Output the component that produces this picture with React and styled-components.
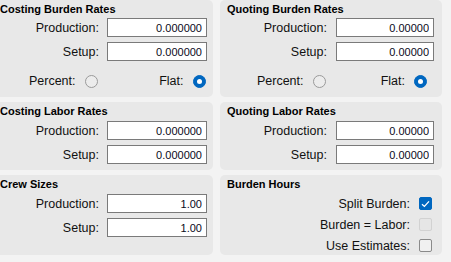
import styled, { createGlobalStyle } from "styled-components";

const GlobalStyle = createGlobalStyle`
  html, body {
    margin: 0;
    padding: 0;
    background: #f3f3f3;
  }
  body {
    font-family: "Liberation Sans", Arial, sans-serif;
    color: #000;
    overflow: hidden;
  }
`;

const Layout = styled.div`
  display: grid;
  grid-template-columns: 220px 222px;
  grid-template-rows: 97px 68px 80px;
  column-gap: 7px;
  row-gap: 5px;
  margin-left: -7px;
`;

const Panel = styled.section`
  background: #e8e8e8;
  border-radius: 5px;
  padding: 1px ${(p) => p.$padRight}px 0 7px;
  display: flex;
  flex-direction: column;
`;

const Title = styled.h3`
  margin: 0 0 ${(p) => p.$after || 1}px;
  font-size: 11px;
  font-weight: bold;
  line-height: 16px;
  height: 16px;
  white-space: nowrap;
`;

const Fields = styled.div`
  display: grid;
  grid-template-columns: 1fr ${(p) => p.$inputWidth}px;
  column-gap: ${(p) => p.$gap}px;
  row-gap: 5px;
  align-items: center;
`;

const Label = styled.label`
  text-align: right;
  font-size: 12.5px;
  color: #111;
  white-space: nowrap;
`;

const NumberBox = styled.input`
  box-sizing: border-box;
  width: 100%;
  height: 19px;
  border: 1px solid #7a7a7a;
  background: #fff;
  text-align: right;
  font: 11px "Liberation Sans", Arial, sans-serif;
  color: #0a0a20;
  padding: 0 4px;
  outline: none;
`;

const ChoiceRow = styled.div`
  display: grid;
  grid-template-columns: 1fr ${(p) => p.$inputWidth}px;
  column-gap: ${(p) => p.$gap}px;
  margin-top: 12px;
  height: 16px;
`;

const Choice = styled.div`
  display: flex;
  justify-content: flex-end;
  align-items: center;
  gap: 9px;
  padding-right: ${(p) => p.$inset}px;
`;

const Radio = styled.span`
  box-sizing: border-box;
  width: 13px;
  height: 13px;
  border-radius: 50%;
  border: 1px solid ${(p) => (p.$on ? "#0067c0" : "#9a9a9a")};
  background: ${(p) => (p.$on ? "#0067c0" : "#ececec")};
  display: flex;
  align-items: center;
  justify-content: center;

  &::after {
    content: "";
    display: ${(p) => (p.$on ? "block" : "none")};
    width: 5px;
    height: 5px;
    border-radius: 50%;
    background: #fff;
  }
`;

const Checks = styled.div`
  display: flex;
  flex-direction: column;
`;

const CheckRow = styled.div`
  height: 21px;
  display: flex;
  justify-content: flex-end;
  align-items: center;
  gap: 9px;
  padding-right: 2px;
`;

const Box = styled.span`
  box-sizing: border-box;
  width: 13px;
  height: 13px;
  border-radius: 2px;
  display: flex;
  align-items: center;
  justify-content: center;
  border: 1px solid
    ${(p) => (p.$state === "on" ? "#0067c0" : p.$state === "off" ? "#d2d2d2" : "#8a8a8a")};
  background: ${(p) => (p.$state === "on" ? "#0067c0" : p.$state === "off" ? "#e6e6e6" : "#f0f0f0")};
`;

function RatePanel({ title, values, padRight, inputWidth, gap, radios, flatInset }) {
  return (
    <Panel $padRight={padRight}>
      <Title $after={radios ? 1 : 2}>{title}</Title>
      <Fields $inputWidth={inputWidth} $gap={gap}>
        <Label>Production:</Label>
        <NumberBox readOnly value={values[0]} />
        <Label>Setup:</Label>
        <NumberBox readOnly value={values[1]} />
      </Fields>
      {radios && (
        <ChoiceRow $inputWidth={inputWidth} $gap={gap}>
          <Choice $inset={1.5}>
            <Label>Percent:</Label>
            <Radio />
          </Choice>
          <Choice $inset={flatInset}>
            <Label>Flat:</Label>
            <Radio $on />
          </Choice>
        </ChoiceRow>
      )}
    </Panel>
  );
}

function CheckMark() {
  return (
    <svg width="9" height="8" viewBox="0 0 9 8">
      <path d="M1 4.2 L3.4 6.4 L8 1.4" fill="none" stroke="#fff" strokeWidth="1.3" />
    </svg>
  );
}

export default function App() {
  const left = { padRight: 6, inputWidth: 100, gap: 8 };
  const right = { padRight: 8, inputWidth: 98, gap: 9 };
  return (
    <>
      <GlobalStyle />
      <Layout>
        <RatePanel title="Costing Burden Rates" values={["0.000000", "0.000000"]} radios flatInset={1.5} {...left} />
        <RatePanel title="Quoting Burden Rates" values={["0.00000", "0.00000"]} radios flatInset={7} {...right} />
        <RatePanel title="Costing Labor Rates" values={["0.000000", "0.000000"]} {...left} />
        <RatePanel title="Quoting Labor Rates" values={["0.00000", "0.00000"]} {...right} />
        <RatePanel title="Crew Sizes" values={["1.00", "1.00"]} {...left} />
        <Panel $padRight={8}>
          <Title>Burden Hours</Title>
          <Checks>
            <CheckRow>
              <Label>Split Burden:</Label>
              <Box $state="on">
                <CheckMark />
              </Box>
            </CheckRow>
            <CheckRow>
              <Label>Burden = Labor:</Label>
              <Box $state="off" />
            </CheckRow>
            <CheckRow>
              <Label>Use Estimates:</Label>
              <Box />
            </CheckRow>
          </Checks>
        </Panel>
      </Layout>
    </>
  );
}
